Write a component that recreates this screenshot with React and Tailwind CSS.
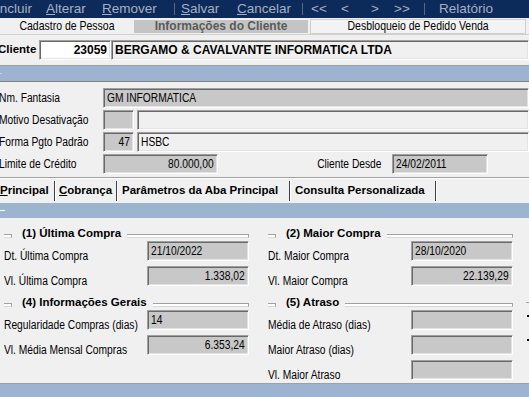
const S = "font-['Liberation_Sans',Arial,sans-serif]";
const sunken =
  "border border-t-[#a0a0a0] border-l-[#a0a0a0] border-b-white border-r-white shadow-[inset_1px_1px_0_#696969,inset_-1px_-1px_0_#e3e3e3]";

function T({ children, right }) {
  return (
    <span
      className={`inline-block whitespace-nowrap scale-x-[0.82] ${right ? "origin-right" : "origin-left"}`}
    >
      {children}
    </span>
  );
}

function Field({ className, children, right }) {
  return (
    <div
      className={`${sunken} h-[20px] shrink-0 flex items-center px-[3px] text-[12.5px] leading-none text-black overflow-hidden ${
        right ? "justify-end" : ""
      } ${className}`}
    >
      {children ? <T right={right}>{children}</T> : null}
    </div>
  );
}

function GroupHead({ title }) {
  return (
    <div className="h-[14px] flex items-end">
      <div className="w-[8px] h-[4px] mb-[1px] bg-white border-t border-r border-b border-t-[#a0a0a0] border-r-[#a0a0a0] border-b-[#d8d8d8]" />
      <div className="ml-[10px] text-[11.5px] font-bold leading-none text-black whitespace-nowrap">{title}</div>
      <div className="flex-1 ml-[6px] h-[4px] mb-[1px] bg-white border-t border-r border-b border-t-[#a0a0a0] border-r-[#a0a0a0] border-b-[#d8d8d8]" />
    </div>
  );
}

function Row({ label, children, mt }) {
  return (
    <div className={`flex items-end h-[20px] ${mt}`}>
      <div className="w-[143px] shrink-0 text-[12.5px] leading-none mb-[-1px] text-black">
        <T>{label}</T>
      </div>
      {children}
    </div>
  );
}

function Sep() {
  return <div className="w-px h-[12px] shrink-0 bg-[#5a6782]" />;
}

function TabSep() {
  return <div className="w-[2px] h-[20px] shrink-0 border-l border-l-[#404040] border-r border-r-white" />;
}

export default function App() {
  return (
    <div className={`w-[529px] h-[397px] overflow-hidden bg-[#f0f0f0] flex flex-col ${S}`}>
      {/* Toolbar */}
      <div className="h-[18px] shrink-0 bg-[#0c2a5a] flex items-center text-[13.5px] text-[#a7b0c2] whitespace-nowrap">
        <span className="w-[50px] ml-[-4px] shrink-0">Incluir</span>
        <span className="w-[56px] shrink-0"><u>A</u>lterar</span>
        <span className="w-[72px] shrink-0"><u>R</u>emover</span>
        <Sep />
        <span className="w-[56px] ml-[6px] shrink-0"><u>S</u>alvar</span>
        <span className="w-[65px] shrink-0"><u>C</u>ancelar</span>
        <Sep />
        <span className="w-[30px] ml-[8px] shrink-0">&lt;&lt;</span>
        <span className="w-[30px] shrink-0">&lt;</span>
        <span className="w-[23px] shrink-0">&gt;</span>
        <span className="w-[30px] shrink-0">&gt;&gt;</span>
        <Sep />
        <span className="ml-[14px] shrink-0">Relatório</span>
      </div>

      {/* Top tabs */}
      <div className="h-[17px] shrink-0 flex items-center text-[12.8px] leading-none border-b border-b-[#d0d0d0]">
        <div className="w-[134px] h-[15px] flex items-center justify-center text-black">
          <span className="inline-block whitespace-nowrap scale-x-[0.82]">Cadastro de Pessoa</span>
        </div>
        <div className="w-[174px] h-[13px] bg-[#c4c4c4] flex items-center justify-center text-[#5a5a5a] font-bold text-[12px] whitespace-nowrap">
          Informações do Cliente
        </div>
        <div className="w-[216px] ml-[2px] h-[15px] flex items-center justify-center text-black border border-[#cfcfcf] bg-[#f3f3f3]">
          <span className="inline-block whitespace-nowrap scale-x-[0.82]">Desbloqueio de Pedido Venda</span>
        </div>
      </div>

      {/* Cliente row */}
      <div className="h-[20px] mt-[5px] shrink-0 flex items-center">
        <div className="w-[41px] ml-[-2px] text-[11.5px] font-bold text-black">Cliente</div>
        <div className={`${sunken} w-[72px] h-[20px] bg-white flex items-center justify-end px-[3px] text-[12px] font-bold`}>23059</div>
        <div className={`${sunken} flex-1 h-[20px] flex items-center px-[3px] text-[12px] font-bold whitespace-nowrap`}>
          BERGAMO &amp; CAVALVANTE INFORMATICA LTDA
        </div>
      </div>

      {/* separator + blue band */}
      <div className="h-[6px] shrink-0 border-b border-b-[#a0a0a0]" />
      <div className="h-[16px] shrink-0 bg-[#9cb4d0] border-b border-b-[#808080] flex items-center">
        <div className="w-[2px] h-px bg-[#e8c8c8]" />
      </div>

      {/* Upper fields */}
      <div className="flex flex-col gap-[2px] mt-[6px] shrink-0 text-black">
        <div className="flex items-center h-[20px]">
          <div className="w-[104px] ml-[-1px] shrink-0 text-[12.5px] leading-none"><T>Nm. Fantasia</T></div>
          <Field className="flex-1 bg-[#c8c8c8]">GM INFORMATICA</Field>
        </div>
        <div className="flex items-center h-[20px]">
          <div className="w-[104px] ml-[-1px] shrink-0 text-[12.5px] leading-none"><T>Motivo Desativação</T></div>
          <Field className="w-[31px] bg-[#c8c8c8]"></Field>
          <Field className="flex-1 ml-[3px]"></Field>
        </div>
        <div className="flex items-center h-[20px]">
          <div className="w-[104px] ml-[-1px] shrink-0 text-[12.5px] leading-none"><T>Forma Pgto Padrão</T></div>
          <Field className="w-[31px] bg-[#c8c8c8]" right>47</Field>
          <Field className="flex-1 ml-[3px]">HSBC</Field>
        </div>
        <div className="flex items-center h-[20px]">
          <div className="w-[104px] ml-[-1px] shrink-0 text-[12.5px] leading-none"><T>Limite de Crédito</T></div>
          <Field className="w-[115px] bg-[#c8c8c8]" right>80.000,00</Field>
          <div className="w-[174px] shrink-0 text-[12.5px] leading-none text-right pr-[10px]"><T right>Cliente Desde</T></div>
          <Field className="w-[96px] bg-[#c8c8c8]">24/02/2011</Field>
        </div>
      </div>

      {/* separator */}
      <div className="h-[4px] shrink-0 border-b border-b-[#a0a0a0]" />
      <div className="h-px shrink-0 bg-white" />

      {/* Lower tabs */}
      <div className="h-[24px] shrink-0 flex items-center text-[11.5px] font-bold text-black whitespace-nowrap">
        <div className="w-[54px]"><u>P</u>rincipal</div>
        <TabSep />
        <div className="w-[60px] pl-[3px]"><u>C</u>obrança</div>
        <TabSep />
        <div className="w-[171px] pl-[4px]">Parâmetros da Aba Principal</div>
        <TabSep />
        <div className="w-[144px] pl-[4px]">Consulta Personalizada</div>
        <TabSep />
      </div>

      <div className="h-[15px] shrink-0 bg-[#9cb4d0] flex items-center">
        <div className="w-[5px] h-px bg-white" />
      </div>

      {/* Content */}
      <div className="flex shrink-0 h-[166px] border-b border-b-[#a0a0a0]">
        <div className="w-[249px] shrink-0 pl-[4px] flex flex-col">
          <div className="mt-[7px]"><GroupHead title="(1) Última Compra" /></div>
          <Row label="Dt. Última Compra" mt="mt-[2px]">
            <Field className="w-[102px] bg-[#c8c8c8]">21/10/2022</Field>
          </Row>
          <Row label="Vl. Última Compra" mt="mt-[5px]">
            <Field className="w-[102px] bg-[#c8c8c8]" right>1.338,02</Field>
          </Row>
          <div className="mt-[8px]"><GroupHead title="(4) Informações Gerais" /></div>
          <Row label="Regularidade Compras (dias)" mt="mt-[2px]">
            <Field className="w-[102px] bg-[#c8c8c8]">14</Field>
          </Row>
          <Row label="Vl. Média Mensal Compras" mt="mt-[5px]">
            <Field className="w-[102px] bg-[#c8c8c8]" right>6.353,24</Field>
          </Row>
        </div>
        <div className="w-[245px] shrink-0 ml-[19px] flex flex-col">
          <div className="mt-[7px]"><GroupHead title="(2) Maior Compra" /></div>
          <Row label="Dt. Maior Compra" mt="mt-[2px]">
            <Field className="w-[102px] bg-[#c8c8c8]">28/10/2020</Field>
          </Row>
          <Row label="Vl. Maior Compra" mt="mt-[5px]">
            <Field className="w-[102px] bg-[#c8c8c8]" right>22.139,29</Field>
          </Row>
          <div className="mt-[8px]"><GroupHead title="(5) Atraso" /></div>
          <Row label="Média de Atraso (dias)" mt="mt-[2px]">
            <Field className="w-[102px] bg-[#c8c8c8]"></Field>
          </Row>
          <Row label="Maior Atraso (dias)" mt="mt-[5px]">
            <Field className="w-[102px] bg-[#c8c8c8]"></Field>
          </Row>
          <Row label="Vl. Maior Atraso" mt="mt-[5px]">
            <Field className="w-[102px] bg-[#c8c8c8]"></Field>
          </Row>
        </div>
        <div className="flex-1 flex flex-col items-end">
          <div className="w-[3px] h-px mt-[84px] bg-[#a0a0a0]" />
          <div className="w-[2px] h-[2px] mt-[12px] bg-black" />
          <div className="w-[2px] h-[2px] mt-[22px] bg-black" />
        </div>
      </div>
      <div className="flex-1 bg-[#9cb4d0]" />
    </div>
  );
}
